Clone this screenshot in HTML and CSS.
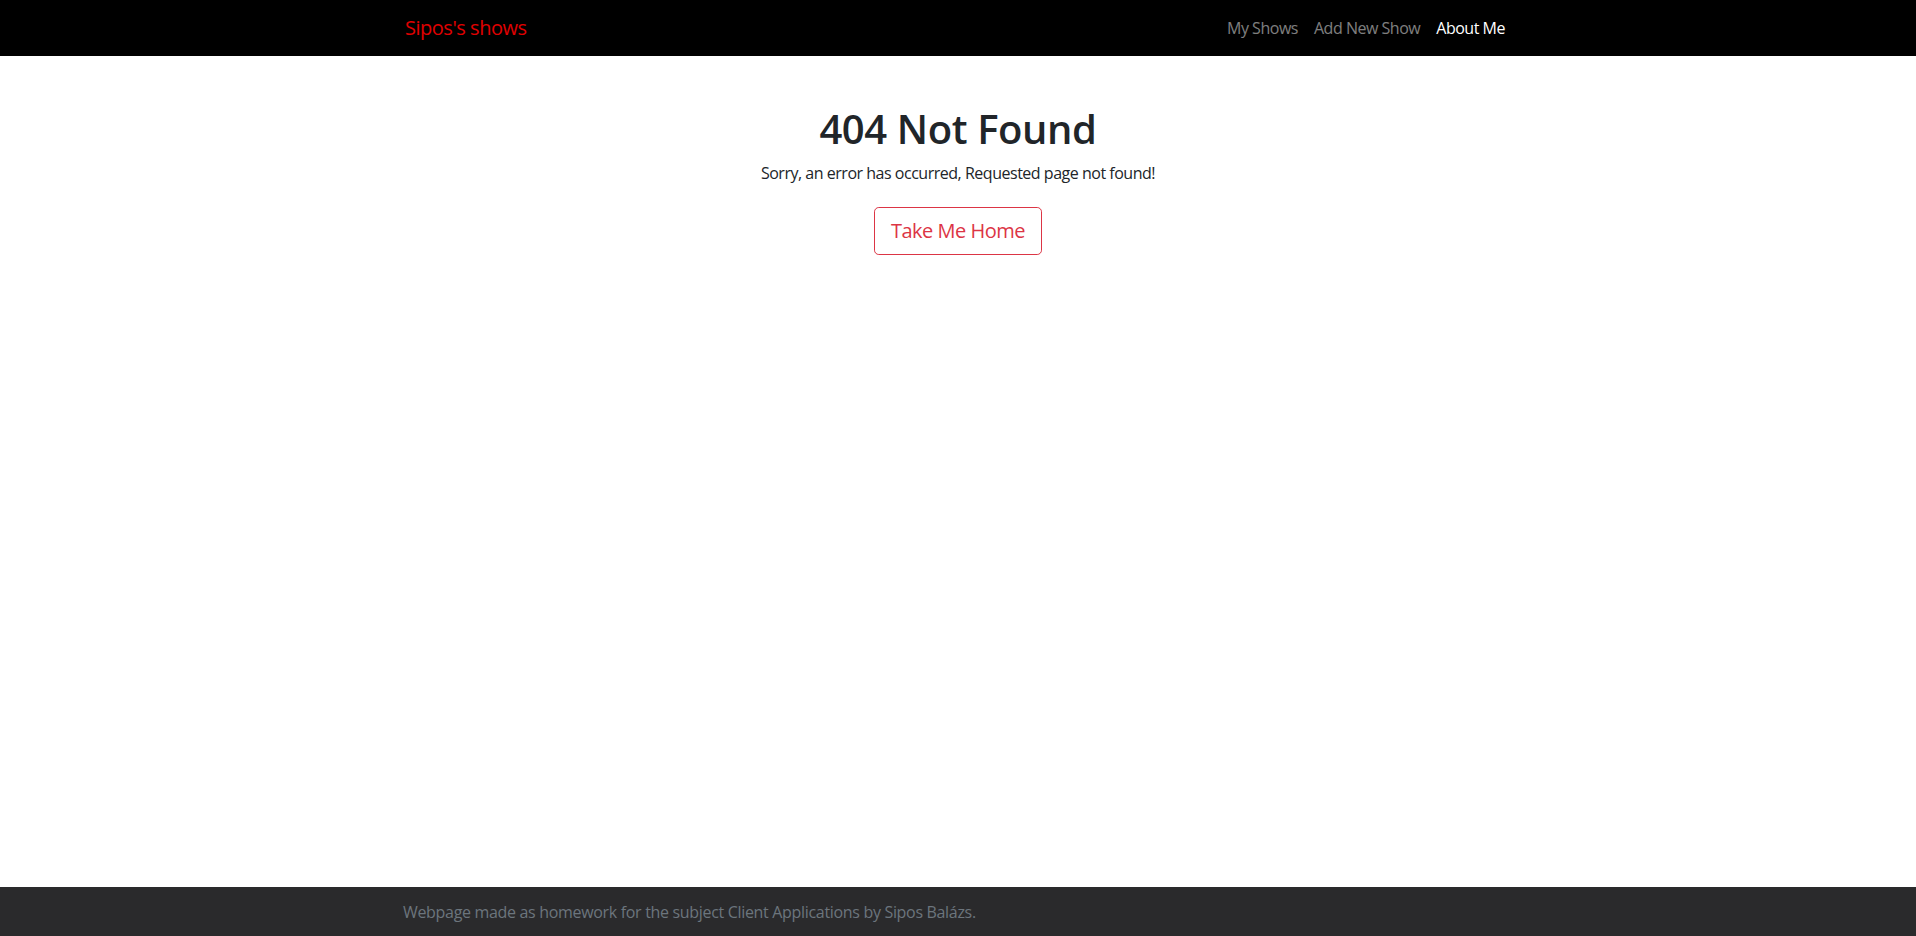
FILE: index.html
```html
<!DOCTYPE html>
<html lang="en">
<head>
<meta charset="utf-8">
<title>Sipos's shows</title>
<link rel="stylesheet" href="styles.css">
</head>
<body>
<div class="page">
  <nav class="navbar">
    <div class="container nav-inner">
      <a class="brand" href="#">Sipos's shows</a>
      <ul class="nav-links">
        <li><a class="nav-link" href="#">My Shows</a></li>
        <li><a class="nav-link" href="#">Add New Show</a></li>
        <li><a class="nav-link active" href="#">About Me</a></li>
      </ul>
    </div>
  </nav>
  <main class="container main">
    <h1 class="title">404 Not Found</h1>
    <p class="subtitle">Sorry, an error has occurred, Requested page not found!</p>
    <a class="btn-home" href="#">Take Me Home</a>
  </main>
  <footer class="footer">
    <div class="container">
      <span class="footer-text">Webpage made as homework for the subject Client Applications by Sipos Balázs.</span>
    </div>
  </footer>
</div>
</body>
</html>
```
FILE: styles.css
```css
* { box-sizing: border-box; }
html, body { margin: 0; height: 100%; }
body {
  font-family: "Open Sans", "Noto Sans", Roboto, sans-serif;
  font-size: 16px;
  line-height: 1.5;
  letter-spacing: -0.03em;
  color: #212529;
  background: #fff;
}
.page {
  min-height: 100%;
  display: flex;
  flex-direction: column;
}
.container {
  width: 1140px;
  margin: 0 auto;
  padding: 0 15px;
}
.navbar {
  background: #000;
  height: 56px;
  display: flex;
  align-items: center;
}
.nav-inner {
  display: flex;
  justify-content: space-between;
  align-items: center;
}
.brand {
  color: #e00000;
  font-size: 20px;
  text-decoration: none;
  line-height: 30px;
  margin-left: 2px;
}
.nav-links {
  display: flex;
  list-style: none;
  margin: 0;
  padding: 0;
}
.nav-link {
  display: block;
  padding: 8px 8px;
  color: rgba(255, 255, 255, 0.5);
  text-decoration: none;
}
.nav-link.active { color: #fff; }
.main {
  flex: 1;
  text-align: center;
  padding-top: 49px;
}
.title {
  margin: 0 0 8px;
  font-size: 40px;
  font-weight: 600;
  line-height: 1.2;
  letter-spacing: -0.01em;
}
.subtitle {
  margin: 0 0 22px;
}
.btn-home {
  display: inline-block;
  padding: 8px 16px;
  font-size: 20px;
  line-height: 1.5;
  color: #dc3545;
  border: 1px solid #dc3545;
  border-radius: 4.8px;
  text-decoration: none;
}
.footer {
  background: #2a2a2c;
  height: 49px;
  display: flex;
  align-items: center;
}
.footer-text {
  color: #6c757d;
  letter-spacing: -0.02em;
}
```
